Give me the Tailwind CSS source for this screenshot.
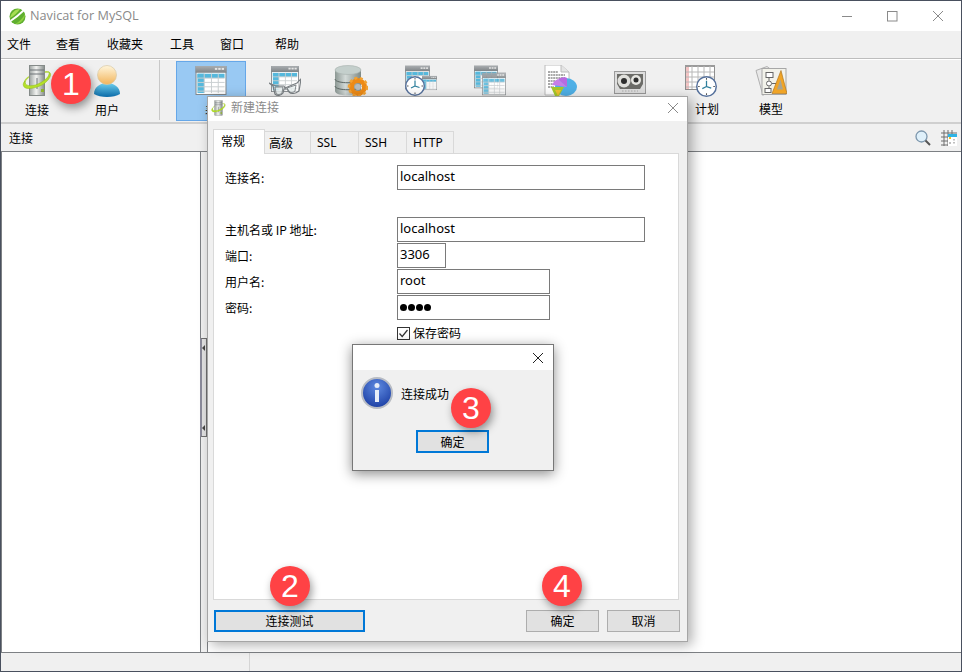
<!DOCTYPE html>
<html lang="zh"><head><meta charset="utf-8">
<script src="https://cdn.jsdelivr.net/npm/@tailwindcss/browser@4"></script>
</head>
<body class="m-0 overflow-hidden">
<svg width="0" height="0" class="absolute">
<defs>
<linearGradient id="chrome" x1="0" x2="0" y1="0" y2="1"><stop offset="0" stop-color="#a9adb0"/><stop offset="1" stop-color="#7f8487"/></linearGradient>
<linearGradient id="srv" x1="0" x2="1" y1="0" y2="0"><stop offset="0" stop-color="#9da3a1"/><stop offset=".45" stop-color="#f2f3f1"/><stop offset="1" stop-color="#868d8b"/></linearGradient>
<linearGradient id="dbg" x1="0" x2="1" y1="0" y2="0"><stop offset="0" stop-color="#8c9894"/><stop offset=".4" stop-color="#d3dad8"/><stop offset="1" stop-color="#7e8a86"/></linearGradient>
<linearGradient id="face" x1="0" x2="0" y1="0" y2="1"><stop offset="0" stop-color="#fff6dc"/><stop offset="1" stop-color="#f2b45a"/></linearGradient>
<linearGradient id="body" x1="0" x2="0" y1="0" y2="1"><stop offset="0" stop-color="#6fd0ee"/><stop offset="1" stop-color="#0a6aa8"/></linearGradient>
<radialGradient id="info" cx=".5" cy=".3" r=".8"><stop offset="0" stop-color="#5f8ae0"/><stop offset="1" stop-color="#12349c"/></radialGradient>
<symbol id="tbl" viewBox="0 0 32 30">
<rect x=".5" y=".5" width="31" height="29" fill="#fff" stroke="#7f8487"/>
<rect x="0" y="0" width="32" height="7" fill="url(#chrome)"/>
<rect x="20" y="2" width="2.500" height="2" fill="#e5e5e5"/><rect x="23.500" y="2" width="2.500" height="2" fill="#e5e5e5"/><rect x="27" y="2" width="2.500" height="2" fill="#e5e5e5"/>
<rect x="2" y="8" width="28" height="4.500" fill="#55b8dc"/><rect x="2" y="8" width="7" height="20" fill="#55b8dc"/>
<path d="M2 12.500H30M2 17H30M2 21.500H30M2 26H30M9 8V28M16.500 8V28M23.500 8V28" stroke="#c9ced0" stroke-width="1" fill="none"/>
</symbol>
<symbol id="clk" viewBox="0 0 20 20">
<circle cx="10" cy="10" r="9.300" fill="#fff" stroke="#56719c" stroke-width="1.400"/>
<path d="M10 4.500V10L14.500 11.500M10 10L6 12" stroke="#2d7f9c" stroke-width="1.200" fill="none"/>
<path d="M10 2v1.500M10 16.500V18M2 10h1.500M16.500 10H18" stroke="#555" stroke-width="1"/>
</symbol>
<symbol id="srvc" viewBox="0 0 30 31">
<path d="M3 19C0 13 16 6 27 7" fill="none" stroke="#b7d84a" stroke-width="1.600"/>
<rect x="7.500" y=".5" width="15" height="30" fill="url(#srv)" stroke="#858b89"/>
<path d="M8 5H22M8 9H22M15 13V24" stroke="#6f7578" fill="none"/>
<path d="M22 24H19V27H22Z" fill="#8fb42a"/>
<path d="M27 7C31 9 27 16 20 20C12 24 3 25 1.500 21C.500 19 2 17 3 16C2 21 9 22 16 19C23 16 28 11 27 7Z" fill="#b5e02a" stroke="#8ebc18" stroke-width=".5"/>
</symbol>
</defs>
</svg>

<div class="relative w-[962px] h-[672px] bg-[#f0f0f0] border border-[#49505e] flex flex-col text-[12px] text-black" style="font-family:'Noto Sans CJK SC','Noto Sans',sans-serif">
  <!-- title bar -->
  <div class="h-[30px] bg-white flex items-center shrink-0">
    <svg class="ml-[8px]" width="17" height="17" viewBox="0 0 17 17"><circle cx="8.500" cy="8.500" r="8" fill="#5fae2f"/><path d="M1 10C2 5 6 1 11 1C9 4 5 8 1 10Z" fill="#a6de52"/><path d="M6 16C10 14 14 10 16 6C16 11 12 16 6 16Z" fill="#8ed040"/><path d="M1.500 13C6 10 11 6 15 2" stroke="#fff" stroke-width="1.800" fill="none"/></svg>
    <span class="ml-[4px] text-[12.700px] text-[#8a8a8a]" style="font-family:'Open Sans',sans-serif">Navicat for MySQL</span>
    <div class="ml-auto flex items-center h-full text-[#777]">
      <svg class="mr-[34px]" width="11" height="11" viewBox="0 0 11 11"><path d="M0 5.500H10" stroke="#8a8a8a"/></svg>
      <svg class="mr-[34px]" width="11" height="11" viewBox="0 0 11 11"><rect x=".5" y=".5" width="9.500" height="9.500" fill="none" stroke="#8a8a8a"/></svg>
      <svg class="mr-[17px]" width="12" height="12" viewBox="0 0 12 12"><path d="M1 1L11 11M11 1L1 11" stroke="#8a8a8a"/></svg>
    </div>
  </div>
  <!-- menu -->
  <div class="h-[28px] pb-px flex items-center border-b border-[#bdbdbd] shrink-0 relative">
    <span class="ml-[6px]">文件</span><span class="ml-[25px]">查看</span><span class="ml-[27px]">收藏夹</span><span class="ml-[27px]">工具</span><span class="ml-[26px]">窗口</span><span class="ml-[31px]">帮助</span>
  </div>
  <!-- toolbar -->
  <div class="h-[65px] flex items-start border-b-2 border-[#cfcfcf] border-t border-t-white shrink-0">
    <div class="w-[70px] ml-[1px] h-[60px] flex flex-col items-center">
      <svg class="mt-[5px]" width="30" height="31"><use href="#srvc"/></svg><span class="mt-[7px] leading-[14px]">连接</span>
    </div>
    <div class="w-[70px] h-[60px] flex flex-col items-center">
      <svg class="mt-[5px]" width="26" height="32" viewBox="0 0 26 32"><path d="M0 29C0 22 6 18 13 18S26 22 26 29C20 33 6 33 0 29Z" fill="url(#body)"/><circle cx="13" cy="10" r="9.500" fill="url(#face)" stroke="#d9c9a5" stroke-width=".7"/></svg><span class="mt-[6px] leading-[14px]">用户</span>
    </div>
    <div class="w-px h-[60px] bg-[#c8c8c8] ml-[17px] mr-[16px]"></div>
    <div class="w-[70px] h-[60px] mt-px flex flex-col items-center bg-[#99c9f3] border border-[#66a7e8]">
      <svg class="mt-[4px]" width="32" height="29"><use href="#tbl"/></svg><span class="mt-[9px] leading-[14px]">表</span>
    </div>
    <div class="w-[68px] h-[60px] ml-[5px] flex flex-col items-center">
      <svg class="mt-[6px]" width="32" height="31" viewBox="0 0 32 31"><use href="#tbl" x="2" y="0" width="28" height="26"/><path d="M0 17L7 20H15L16 22L28 17L32 13L30 25C26 28 22 28 20 26L18 23H15L14 27C12 30 8 30 6 28L4 20Z" fill="#ffffff90" stroke="#7a8084" stroke-width="1.200" stroke-linejoin="round"/><path d="M6 21H14L13 27C11 29 8 29 7 27ZM18 22L27 19L26 25C24 27 21 27 20 25Z" fill="#e2ecec99" stroke="#6d7377" stroke-width=".8"/></svg>
    </div>
    <div class="w-[68px] h-[60px] -ml-[2px] flex flex-col items-center">
      <svg class="mt-[5px]" width="34" height="32" viewBox="0 0 34 32"><path d="M1 5V26C1 32 27 32 27 26V5Z" fill="url(#dbg)"/><ellipse cx="14" cy="5" rx="13" ry="4.500" fill="#c4cfcc" stroke="#a6b0ad" stroke-width=".6"/><path d="M1 14C1 19 27 19 27 14M1 21C1 26 27 26 27 21" fill="none" stroke="#5f6966"/><circle cx="24" cy="22" r="6.500" fill="none" stroke="#ed8a16" stroke-width="5"/><circle cx="24" cy="22" r="9" fill="none" stroke="#f2a233" stroke-width="2.500" stroke-dasharray="3 2.500"/><circle cx="24" cy="22" r="3" fill="#b7bcbd"/></svg>
    </div>
    <div class="w-[68px] h-[60px] ml-[2px] flex flex-col items-center">
      <svg class="mt-[5px]" width="32" height="31" viewBox="0 0 32 31"><use href="#tbl" x="0" y="0" width="25" height="25"/><use href="#tbl" x="17" y="6" width="15" height="24"/><use href="#clk" x="0" y="11" width="20" height="20"/></svg>
    </div>
    <div class="w-[68px] h-[60px] ml-[1px] flex flex-col items-center">
      <svg class="mt-[5px]" width="32" height="31" viewBox="0 0 32 31"><use href="#tbl" x="0" y="0" width="24" height="24"/><g opacity=".85"><use href="#tbl" x="8" y="7" width="24" height="24"/></g></svg>
    </div>
    <div class="w-[68px] h-[60px] ml-[2px] flex flex-col items-center">
      <svg class="mt-[5px]" width="33" height="32" viewBox="0 0 33 32"><path d="M1 0H17L25 7V30H1Z" fill="#fff" stroke="#bcbcbc"/><path d="M17 0V7H25" fill="#e4e4e4" stroke="#bcbcbc"/><path d="M4 7H14M4 10H21M4 13H21M4 16H14M4 19H12M4 22H10" stroke="#555" stroke-width="1" stroke-dasharray="2 .6"/><ellipse cx="22" cy="22" rx="11" ry="9" fill="#4fb0e6"/><path d="M23 22L14 14C18 12 22 12 23 13Z" fill="#b86ae0"/><path d="M23 22L8 20C9 17 12 15 14 14Z" fill="#c77fe6"/><path d="M7 22H20L15 31H11Z" fill="#a5c92a"/><path d="M11 25H17L14 31Z" fill="#f2c230"/></svg>
    </div>
    <div class="w-[68px] h-[60px] ml-[2px] flex flex-col items-center">
      <svg class="mt-[11px]" width="32" height="23" viewBox="0 0 32 23"><rect x=".5" y=".5" width="31" height="22" fill="#dedede" stroke="#9a9a9a"/><path d="M3 3H29V13L26 18H6L3 13Z" fill="#6c6c68"/><circle cx="10" cy="10" r="6.500" fill="#e0e0dc"/><circle cx="10" cy="10" r="3" fill="#2e2e2e"/><circle cx="22" cy="9" r="5" fill="#e6e6e2"/><circle cx="22" cy="9" r="2.500" fill="#2e2e2e"/><path d="M8 20H24" stroke="#aaa" stroke-dasharray="1.500 1.500"/></svg>
    </div>
    <div class="w-[68px] h-[60px] ml-[9px] flex flex-col items-center">
      <svg class="mt-[5px] mr-[12px]" width="32" height="32" viewBox="0 0 32 32"><rect x=".5" y=".5" width="29" height="24" fill="#fff" stroke="#8f8f8f"/><rect x="0" y="0" width="30" height="2" fill="#9a9a9a"/><rect x="1" y="2" width="3" height="22" fill="#f3c3c3"/><path d="M1 7H29M1 12H29M1 17H29M1 22H29M7 1V24M13 1V24M19 1V24M25 1V24" stroke="#b8b8b8" fill="none"/><use href="#clk" x="11" y="11" width="21" height="21"/></svg><span class="mt-[5px] leading-[14px]">计划</span>
    </div>
    <div class="w-[68px] h-[60px] -ml-[4px] flex flex-col items-center">
      <svg class="mt-[5px]" width="32" height="32" viewBox="0 0 32 31"><path d="M1 5L12 1L16 4L8 30Z" fill="#e8e8e8" stroke="#b0b0b0"/><rect x="7" y="3" width="24" height="26" fill="#f2f2ea" stroke="#a7a7a7"/><rect x="11" y="7" width="7" height="5" fill="#fff" stroke="#666"/><circle cx="14" cy="18" r="2.500" fill="#fff" stroke="#666"/><rect x="10" y="23" width="6" height="4" fill="#fff" stroke="#666"/><path d="M14 12V15M14 21V23M17 18H21" stroke="#666"/><path d="M26 5L32 28H17Z" fill="#f0a426" stroke="#a76c12" stroke-width=".6"/><path d="M25.500 14L28 24H22Z" fill="#a9a491"/></svg><span class="mt-[5px] leading-[14px]">模型</span>
    </div>
  </div>
  <!-- section bar -->
  <div class="h-[28px] flex items-center shrink-0 border-b border-[#7d8084]">
    <span class="ml-[8px]">连接</span>
    <div class="ml-auto flex items-center mr-[4px]">
      <svg class="mr-[10px]" width="16" height="16" viewBox="0 0 16 16"><circle cx="6.500" cy="6.500" r="5.500" fill="#dff0fa" stroke="#7d97ad" stroke-width="1.300"/><path d="M10.500 10.500L15 15" stroke="#555" stroke-width="2"/></svg>
      <svg width="16" height="16" viewBox="0 0 16 16"><path d="M3 0V16M7 0V16M11 0V16M0 3H16M0 7H16M0 11H16M0 15H16" stroke="#6e6e6e"/><rect x="7" y="4" width="9" height="12" fill="#fff"/><rect x="7" y="4" width="9" height="3" fill="#2eb3e4"/><rect x="8" y="7" width="2" height="2" fill="#f5c518"/><path d="M13 9v1.500M13 12v1.500M9 12v2" stroke="#aaa" stroke-width="1.500"/></svg>
    </div>
  </div>
  <!-- panels -->
  <div class="flex-1 flex min-h-0">
    <div class="w-[200px] bg-white border-r border-l border-[#7d8084] shrink-0"></div>
    <div class="w-[6px] shrink-0 relative">
      <div class="absolute -left-[1px] top-[186px] w-[7px] h-[99px] bg-[#e2e2e2] border border-[#6f6f6f] border-l-2 border-l-[#8b8b9b]">
        <svg class="absolute left-0 top-[6px]" width="4" height="6" viewBox="0 0 4 6"><path d="M0 3L3 0V6Z" fill="#444"/></svg>
        <svg class="absolute left-0 bottom-[5px]" width="4" height="6" viewBox="0 0 4 6"><path d="M0 3L3 0V6Z" fill="#444"/></svg>
      </div>
    </div>
    <div class="flex-1 bg-white border-l border-[#7d8084]"></div>
  </div>
  <!-- status -->
  <div class="h-[19px] shrink-0 border-t border-[#7d8084] flex">
    <div class="w-[249px] border-r border-[#d5d5d5]"></div>
  </div>

  <!-- new connection dialog -->
  <div class="absolute left-[206px] top-[95px] w-[481px] h-[546px] bg-[#f0f0f0] border border-[#a5a5a5] shadow-[4px_3px_12px_rgba(0,0,0,.32)] flex flex-col">
    <div class="h-[24px] bg-white flex items-center shrink-0">
      <svg class="ml-[3px] mb-[3px]" width="15" height="16" viewBox="0 0 30 31"><use href="#srvc"/></svg>
      <span class="ml-[5px] mb-[4px] text-[#8a8a8a]">新建连接</span>
      <svg class="ml-auto mr-[8px] mb-[3px]" width="12" height="12" viewBox="0 0 12 12"><path d="M1 1L11 11M11 1L1 11" stroke="#8a8a8a"/></svg>
    </div>
    <div class="flex items-end h-[33px] pl-[5px] shrink-0 relative z-10">
      <div class="w-[52px] h-[25px] bg-white border border-b-0 border-[#d9d9d9] flex items-center pl-[7px] pb-[2px] -mr-px">常规</div>
      <div class="w-[47px] h-[23px] border border-b-0 border-[#d9d9d9] flex items-center pl-[4px] -mr-px">高级</div>
      <div class="w-[49px] h-[23px] border border-b-0 border-[#d9d9d9] flex items-center pl-[6px] -mr-px" style="font-family:'Noto Sans',sans-serif">SSL</div>
      <div class="w-[49px] h-[23px] border border-b-0 border-[#d9d9d9] flex items-center pl-[6px] -mr-px" style="font-family:'Noto Sans',sans-serif">SSH</div>
      <div class="w-[48px] h-[23px] border border-b-0 border-[#d9d9d9] flex items-center pl-[6px]" style="font-family:'Noto Sans',sans-serif">HTTP</div>
    </div>
    <div class="ml-[5px] mr-[8px] h-[447px] -mt-px bg-white border border-[#d9d9d9] relative pt-[11px] text-[12px]">
      <div class="flex h-[25px] items-center"><span class="w-[183px] pl-[11px]">连接名:</span><div class="w-[248px] h-[25px] border border-[#7a7a7a] pl-[2px] leading-[21px] text-[13px]" style="font-family:'Noto Sans',sans-serif">localhost</div></div>
      <div class="flex h-[25px] items-center mt-[27px]"><span class="w-[183px] pl-[11px]">主机名或 IP 地址:</span><div class="w-[248px] h-[25px] border border-[#7a7a7a] pl-[2px] leading-[21px] text-[13px]" style="font-family:'Noto Sans',sans-serif">localhost</div></div>
      <div class="flex h-[25px] items-center mt-px"><span class="w-[183px] pl-[11px]">端口:</span><div class="w-[49px] h-[25px] border border-[#7a7a7a] pl-[2px] leading-[21px] text-[13px]" style="font-family:'Noto Sans',sans-serif">3306</div></div>
      <div class="flex h-[25px] items-center mt-px"><span class="w-[183px] pl-[11px]">用户名:</span><div class="w-[153px] h-[25px] border border-[#7a7a7a] pl-[2px] leading-[21px] text-[13px]" style="font-family:'Noto Sans',sans-serif">root</div></div>
      <div class="flex h-[25px] items-center mt-px"><span class="w-[183px] pl-[11px]">密码:</span><div class="w-[153px] h-[25px] border border-[#7a7a7a] pl-[2px] flex items-center gap-[1px]"><i class="w-[7px] h-[7px] rounded-full bg-black"></i><i class="w-[7px] h-[7px] rounded-full bg-black"></i><i class="w-[7px] h-[7px] rounded-full bg-black"></i><i class="w-[7px] h-[7px] rounded-full bg-black"></i></div></div>
      <div class="flex items-center mt-[6px] ml-[183px] h-[14px]">
        <svg width="13" height="13" viewBox="0 0 13 13"><rect x=".5" y=".5" width="12" height="12" fill="#fff" stroke="#333"/><path d="M2.500 6.500L5.200 9.500L10.500 3" stroke="#333" fill="none" stroke-width="1.200"/></svg>
        <span class="ml-[3px]">保存密码</span>
      </div>
    </div>
    <div class="flex mt-[10px] pl-[6px] pr-[7px] h-[22px]">
      <div class="w-[151px] h-[22px] bg-[#e1e1e1] border-2 border-[#0078d7] flex items-center justify-center">连接测试</div>
      <div class="ml-auto w-[73px] h-[22px] bg-[#e1e1e1] border border-[#adadad] flex items-center justify-center">确定</div>
      <div class="ml-[8px] w-[73px] h-[22px] bg-[#e1e1e1] border border-[#adadad] flex items-center justify-center">取消</div>
    </div>
  </div>

  <!-- message box -->
  <div class="absolute left-[351px] top-[343px] w-[202px] h-[127px] bg-[#f0f0f0] border border-[#777] shadow-[0_3px_12px_rgba(0,0,0,.45)] flex flex-col">
    <div class="h-[25px] bg-white flex items-center shrink-0">
      <svg class="ml-auto mr-[9px]" width="12" height="12" viewBox="0 0 12 12"><path d="M1 1L11 11M11 1L1 11" stroke="#222"/></svg>
    </div>
    <div class="flex items-center mt-[7px] ml-[8px]">
      <svg width="32" height="32" viewBox="0 0 32 32"><circle cx="16" cy="16" r="15" fill="url(#info)" stroke="#b8bcc4" stroke-width="2"/><circle cx="16" cy="8.500" r="2.500" fill="#e8eef8"/><path d="M16 13V25" stroke="#e8eef8" stroke-width="4"/></svg>
      <span class="ml-[8px] mt-[2px]">连接成功</span>
    </div>
    <div class="w-[73px] h-[23px] ml-[63px] mt-[21px] bg-[#e1e1e1] border-2 border-[#0078d7] flex items-center justify-center">确定</div>
  </div>

  <!-- numbered badges -->
  <div class="absolute left-[50px] top-[63px] w-10 h-10 rounded-full bg-[#ff4245] text-white text-[32px] flex items-center justify-center shadow-[2px_4px_8px_rgba(0,0,0,.4)]" style="font-family:'Liberation Sans',sans-serif">1</div>
  <div class="absolute left-[269px] top-[565px] w-10 h-10 rounded-full bg-[#ff4245] text-white text-[32px] flex items-center justify-center shadow-[2px_4px_8px_rgba(0,0,0,.4)]" style="font-family:'Liberation Sans',sans-serif">2</div>
  <div class="absolute left-[450px] top-[387px] w-10 h-10 rounded-full bg-[#ff4245] text-white text-[32px] flex items-center justify-center shadow-[2px_4px_8px_rgba(0,0,0,.4)]" style="font-family:'Liberation Sans',sans-serif">3</div>
  <div class="absolute left-[541px] top-[565px] w-10 h-10 rounded-full bg-[#ff4245] text-white text-[32px] flex items-center justify-center shadow-[2px_4px_8px_rgba(0,0,0,.4)]" style="font-family:'Liberation Sans',sans-serif">4</div>
</div>
</body></html>
